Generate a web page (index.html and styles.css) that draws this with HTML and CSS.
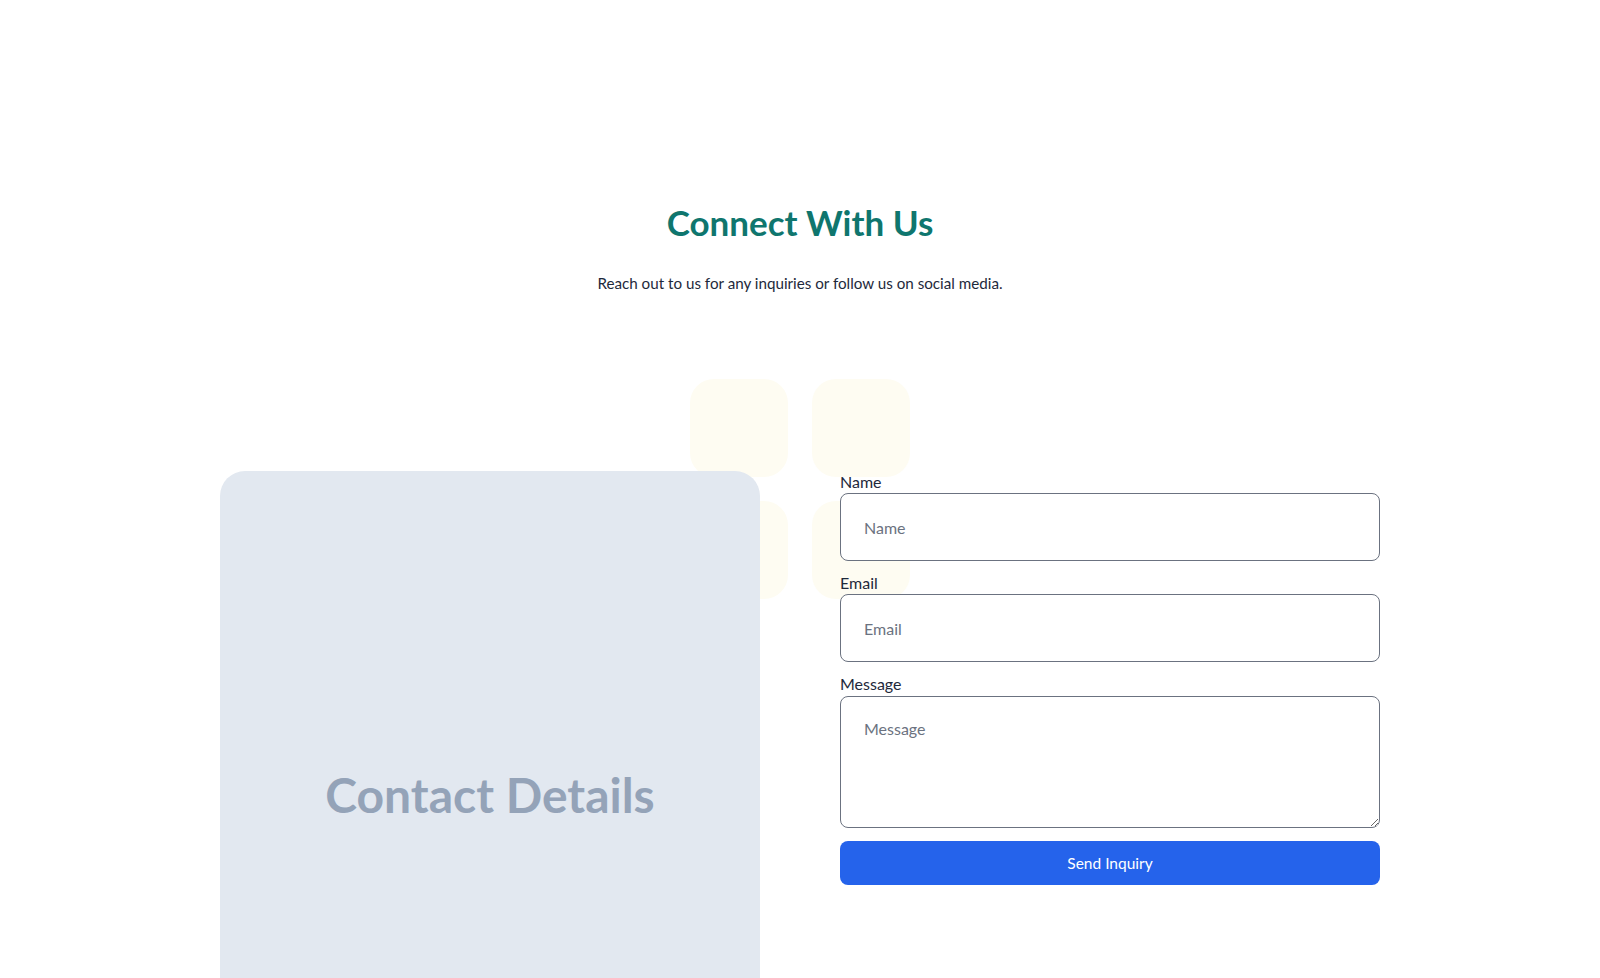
FILE: index.html
```html
<!DOCTYPE html>
<html lang="en">
<head>
<meta charset="utf-8">
<title>Connect With Us</title>
<link rel="stylesheet" href="styles.css">
</head>
<body>
<div class="page">
  <header class="intro">
    <h1 class="title">Connect With Us</h1>
    <p class="subtitle">Reach out to us for any inquiries or follow us on social media.</p>
  </header>
  <section class="contact">
    <div class="deco" aria-hidden="true">
      <span class="tile"></span><span class="tile"></span>
      <span class="tile"></span><span class="tile"></span>
    </div>
    <div class="grid">
      <div class="card">
        <h2 class="card-title">Contact Details</h2>
      </div>
      <form class="form">
        <div class="field">
          <label class="label" for="name">Name</label>
          <input class="input" id="name" type="text" placeholder="Name">
        </div>
        <div class="field">
          <label class="label" for="email">Email</label>
          <input class="input" id="email" type="email" placeholder="Email">
        </div>
        <div class="field">
          <label class="label" for="msg">Message</label>
          <textarea class="input textarea" id="msg" placeholder="Message"></textarea>
        </div>
        <button class="btn" type="button">Send Inquiry</button>
      </form>
    </div>
  </section>
</div>
</body>
</html>
```

FILE: styles.css
```css
html, body {
  margin: 0;
  padding: 0;
  background: #ffffff;
}
body {
  font-family: "Lato", "Inter", sans-serif;
  color: #1e293b;
  overflow: hidden;
}
.page {
  width: 100%;
}
.intro {
  padding-top: 200px;
  text-align: center;
}
.title {
  margin: 0;
  font-size: 35px;
  line-height: 44px;
  font-weight: 700;
  color: #0f766e;
}
.subtitle {
  margin: 27px 0 0;
  font-size: 15.2px;
  line-height: 24px;
  color: #1e293b;
}
.contact {
  position: relative;
  padding-top: 176px;
}
.deco {
  position: absolute;
  top: 84px;
  left: 50%;
  margin-left: -110px;
  display: grid;
  grid-template-columns: 98px 98px;
  grid-auto-rows: 98px;
  gap: 24px;
  z-index: 0;
}
.tile {
  background: #fefcf2;
  border-radius: 24px;
}
.grid {
  position: relative;
  z-index: 1;
  width: 1160px;
  margin: 0 auto;
  display: grid;
  grid-template-columns: 540px 540px;
  column-gap: 80px;
  align-items: start;
}
.card {
  height: 646px;
  background: #e2e8f0;
  border-radius: 25px 25px 0 0;
  display: flex;
  align-items: center;
  justify-content: center;
}
.card-title {
  margin: 0;
  font-family: "Lato", sans-serif;
  font-size: 48px;
  font-weight: 700;
  color: #94a3b8;
}
.form {
  display: flex;
  flex-direction: column;
}
.field {
  display: flex;
  flex-direction: column;
  margin-bottom: 11px;
}
.label {
  font-size: 16px;
  line-height: 21px;
  margin: 0 0 1px;
  color: #1e293b;
}
.input {
  box-sizing: border-box;
  width: 100%;
  height: 68px;
  padding: 0 23px;
  border: 1px solid #6b7280;
  border-radius: 8px;
  background: #ffffff;
  font-family: inherit;
  font-size: 16px;
  color: #1e293b;
  outline: none;
}
.input::placeholder {
  color: #6b7280;
}
.textarea {
  height: 132px;
  margin-top: 1px;
  padding: 22px 23px;
  line-height: 20px;
  resize: vertical;
  display: block;
}
.field:last-of-type {
  margin-bottom: 13px;
}
.btn {
  height: 44px;
  border: none;
  border-radius: 8px;
  background: #2563eb;
  color: #ffffff;
  font-family: inherit;
  font-size: 15.5px;
  cursor: pointer;
}
```
